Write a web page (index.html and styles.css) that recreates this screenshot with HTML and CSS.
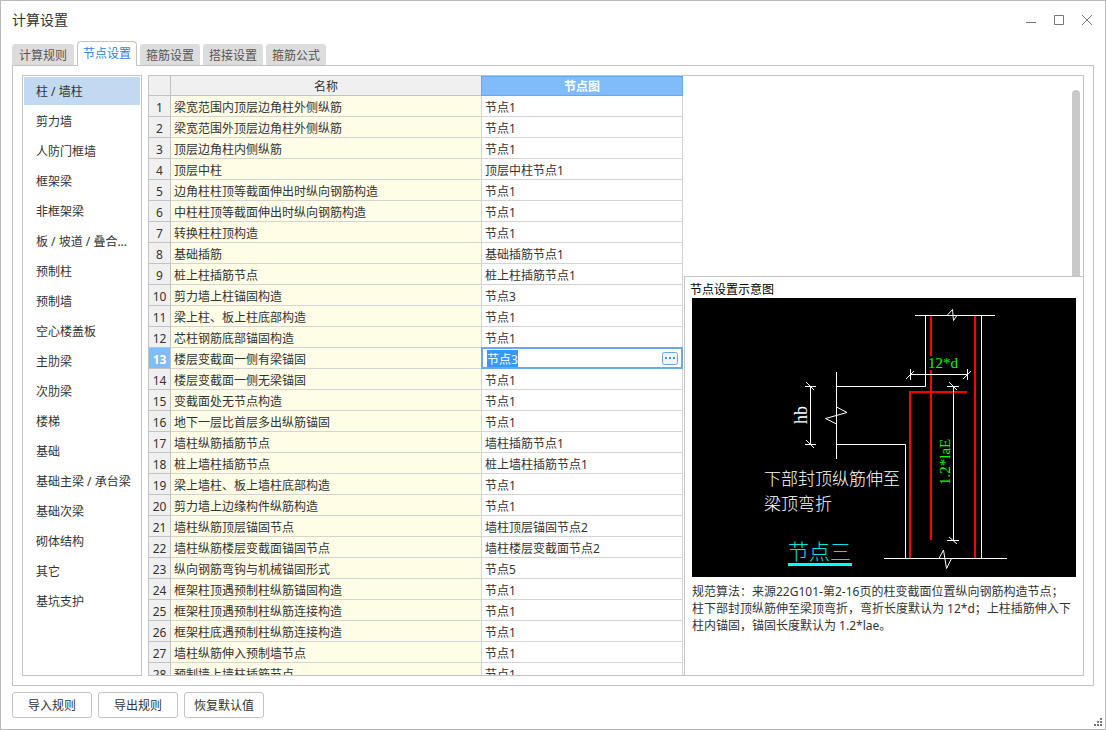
FILE: index.html
```html
<!DOCTYPE html>
<html lang="zh-CN">
<head>
<meta charset="utf-8">
<title>计算设置</title>
<link rel="stylesheet" href="styles.css">
</head>
<body>
<main class="dialog">
  <header class="titlebar">
    <h1 class="title">计算设置</h1>
    <div class="window-controls">
      <button type="button" class="window-button" aria-label="最小化"><svg width="12" height="12" viewBox="0 0 12 12"><path d="M1 8.500H11"/></svg></button>
      <button type="button" class="window-button" aria-label="最大化"><svg width="12" height="12" viewBox="0 0 12 12"><path d="M1.500 1.500H10.500V10.500H1.500Z"/></svg></button>
      <button type="button" class="window-button" aria-label="关闭"><svg width="12" height="12" viewBox="0 0 12 12"><path d="M1 1L11 11M11 1L1 11"/></svg></button>
    </div>
  </header>

  <div class="tabs" role="tablist">
    <button type="button" class="tab" role="tab">计算规则</button>
    <button type="button" class="tab tab-active" role="tab" aria-selected="true">节点设置</button>
    <button type="button" class="tab" role="tab">箍筋设置</button>
    <button type="button" class="tab" role="tab">搭接设置</button>
    <button type="button" class="tab" role="tab">箍筋公式</button>
  </div>

  <section class="panel">
    <nav class="categories">
      <button type="button" class="category category-active">柱 / 墙柱</button>
      <button type="button" class="category">剪力墙</button>
      <button type="button" class="category">人防门框墙</button>
      <button type="button" class="category">框架梁</button>
      <button type="button" class="category">非框架梁</button>
      <button type="button" class="category">板 / 坡道 / 叠合...</button>
      <button type="button" class="category">预制柱</button>
      <button type="button" class="category">预制墙</button>
      <button type="button" class="category">空心楼盖板</button>
      <button type="button" class="category">主肋梁</button>
      <button type="button" class="category">次肋梁</button>
      <button type="button" class="category">楼梯</button>
      <button type="button" class="category">基础</button>
      <button type="button" class="category">基础主梁 / 承台梁</button>
      <button type="button" class="category">基础次梁</button>
      <button type="button" class="category">砌体结构</button>
      <button type="button" class="category">其它</button>
      <button type="button" class="category">基坑支护</button>
    </nav>

    <div class="workspace">
      <div class="grid">
        <table class="nodes">
          <colgroup><col class="col-index"><col class="col-name"><col class="col-node"></colgroup>
          <thead>
            <tr><th></th><th scope="col">名称</th><th scope="col" class="current">节点图</th></tr>
          </thead>
          <tbody>
            <tr><th scope="row">1</th><td>梁宽范围内顶层边角柱外侧纵筋</td><td>节点1</td></tr>
            <tr><th scope="row">2</th><td>梁宽范围外顶层边角柱外侧纵筋</td><td>节点1</td></tr>
            <tr><th scope="row">3</th><td>顶层边角柱内侧纵筋</td><td>节点1</td></tr>
            <tr><th scope="row">4</th><td>顶层中柱</td><td>顶层中柱节点1</td></tr>
            <tr><th scope="row">5</th><td>边角柱柱顶等截面伸出时纵向钢筋构造</td><td>节点1</td></tr>
            <tr><th scope="row">6</th><td>中柱柱顶等截面伸出时纵向钢筋构造</td><td>节点1</td></tr>
            <tr><th scope="row">7</th><td>转换柱柱顶构造</td><td>节点1</td></tr>
            <tr><th scope="row">8</th><td>基础插筋</td><td>基础插筋节点1</td></tr>
            <tr><th scope="row">9</th><td>桩上柱插筋节点</td><td>桩上柱插筋节点1</td></tr>
            <tr><th scope="row">10</th><td>剪力墙上柱锚固构造</td><td>节点3</td></tr>
            <tr><th scope="row">11</th><td>梁上柱、板上柱底部构造</td><td>节点1</td></tr>
            <tr><th scope="row">12</th><td>芯柱钢筋底部锚固构造</td><td>节点1</td></tr>
            <tr>
              <th scope="row" class="current">13</th>
              <td id="row-13-name">楼层变截面一侧有梁锚固</td>
              <td class="editing">
                <div class="editor">
                  <input class="editor-input" type="text" value="节点3" aria-labelledby="row-13-name">
                  <button type="button" class="editor-more" aria-label="选择节点"><svg width="16" height="13" viewBox="0 0 16 13"><rect class="more-frame" x="0.500" y="0.500" width="15" height="12" rx="2"/><path class="more-dots" d="M3 5h2v2H3zM7 5h2v2H7zM11 5h2v2h-2z"/></svg></button>
                </div>
              </td>
            </tr>
            <tr><th scope="row">14</th><td>楼层变截面一侧无梁锚固</td><td>节点1</td></tr>
            <tr><th scope="row">15</th><td>变截面处无节点构造</td><td>节点1</td></tr>
            <tr><th scope="row">16</th><td>地下一层比首层多出纵筋锚固</td><td>节点1</td></tr>
            <tr><th scope="row">17</th><td>墙柱纵筋插筋节点</td><td>墙柱插筋节点1</td></tr>
            <tr><th scope="row">18</th><td>桩上墙柱插筋节点</td><td>桩上墙柱插筋节点1</td></tr>
            <tr><th scope="row">19</th><td>梁上墙柱、板上墙柱底部构造</td><td>节点1</td></tr>
            <tr><th scope="row">20</th><td>剪力墙上边缘构件纵筋构造</td><td>节点1</td></tr>
            <tr><th scope="row">21</th><td>墙柱纵筋顶层锚固节点</td><td>墙柱顶层锚固节点2</td></tr>
            <tr><th scope="row">22</th><td>墙柱纵筋楼层变截面锚固节点</td><td>墙柱楼层变截面节点2</td></tr>
            <tr><th scope="row">23</th><td>纵向钢筋弯钩与机械锚固形式</td><td>节点5</td></tr>
            <tr><th scope="row">24</th><td>框架柱顶遇预制柱纵筋锚固构造</td><td>节点1</td></tr>
            <tr><th scope="row">25</th><td>框架柱顶遇预制柱纵筋连接构造</td><td>节点1</td></tr>
            <tr><th scope="row">26</th><td>框架柱底遇预制柱纵筋连接构造</td><td>节点1</td></tr>
            <tr><th scope="row">27</th><td>墙柱纵筋伸入预制墙节点</td><td>节点1</td></tr>
            <tr><th scope="row">28</th><td>预制墙上墙柱插筋节点</td><td>节点1</td></tr>
          </tbody>
        </table>
      </div>

      <div class="side">
        <div class="scroll-area"><div class="scroll-thumb"></div></div>
        <section class="preview">
          <h2 class="preview-title">节点设置示意图</h2>
          <svg class="diagram" viewBox="0 0 384 279" role="img" aria-label="节点三">
            <rect width="384" height="279" fill="#000"/>
            <g class="rebar">
              <path d="M239 18V58M239 72V242"/>
              <path d="M283 18V260"/>
              <path d="M275 94H218V260"/>
            </g>
            <g class="outline">
              <path d="M223 17.500H303"/>
              <path d="M233.500 17V88.500H144.500"/>
              <path d="M289.500 17V260"/>
              <path d="M192 260.500H315"/>
              <path d="M144.500 146.500H213.500V260"/>
              <path d="M144.500 74V161"/>
              <path d="M144.500 109L155 114.500L133.500 120.500L144.500 126"/>
              <path d="M255 17.500L260.500 11.500L261.500 22.500L265 17.500"/>
              <path d="M247 260.500L251.500 252L254.500 270.500L259.500 260.500"/>
            </g>
            <g class="outline">
              <path d="M218 76.500H276M218.500 71V82M275.500 71V82M214 81L222 73M271 81L279 73"/>
              <path d="M261.500 88V243M255 88.500H267M255 242.500H267M257 84L265 92M257 239L265 246"/>
              <path d="M118.500 88V147M113 88.500H124M113 146.500H124M114 84L122 92M114 142L122 150"/>
            </g>
            <text class="dim" x="236" y="70">12*d</text>
            <text class="dim" transform="translate(258 187) rotate(-90)">1.2*laE</text>
            <text class="beam" transform="translate(115 126) rotate(-90)">hb</text>
            <text class="note" x="72" y="187">下部封顶纵筋伸至</text>
            <text class="note" x="72" y="212">梁顶弯折</text>
            <text class="caption" x="96" y="261">节点三</text>
            <rect x="96" y="265" width="64" height="3" fill="#0ff"/>
          </svg>
          <p class="rule">规范算法：来源22G101-第2-16页的柱变截面位置纵向钢筋构造节点；柱下部封顶纵筋伸至梁顶弯折，弯折长度默认为 12*d；上柱插筋伸入下柱内锚固，锚固长度默认为 1.2*lae。</p>
        </section>
      </div>
    </div>
  </section>

  <footer class="actions">
    <button type="button" class="action">导入规则</button>
    <button type="button" class="action">导出规则</button>
    <button type="button" class="action">恢复默认值</button>
  </footer>
  <svg class="grip" width="8" height="8" viewBox="0 0 8 8"><path d="M6 0h2v2H6zM3 3h2v2H3zM6 3h2v2H6zM0 6h2v2H0zM3 6h2v2H3zM6 6h2v2H6z"/></svg>
</main>
<script src="app.js"></script>
</body>
</html>
```

FILE: styles.css
```css
* {
  box-sizing: border-box;
}

body {
  margin: 0;
  color: #333;
  font-family: "Noto Sans", "Noto Sans CJK SC", sans-serif;
  font-size: 12px;
  line-height: 16px;
}

button,
input {
  margin: 0;
  padding: 0;
  border: 0;
  background: none;
  color: inherit;
  font: inherit;
}

.dialog {
  position: relative;
  display: flex;
  flex-direction: column;
  height: 100vh;
  border: 1px solid #b9b9b9;
  background: #fff;
}

.titlebar {
  display: flex;
  align-items: center;
  justify-content: space-between;
  height: 38px;
  padding: 0 4px 0 11px;
}

.title {
  margin: 0;
  font-size: 14px;
  font-weight: 400;
  line-height: 18px;
}

.window-controls {
  display: flex;
}

.window-button {
  display: grid;
  place-items: center;
  width: 28px;
  height: 28px;
}

.window-button path {
  fill: none;
  stroke: #777;
}

.tabs {
  position: relative;
  display: flex;
  align-items: flex-end;
  gap: 3px;
  margin: 2px 11px -1px;
}

.tab {
  height: 21px;
  margin-bottom: 1px;
  padding: 2px 6px 0;
  border-radius: 3px 3px 0 0;
  background: #ddd;
  color: #555;
}

.tab:first-child {
  padding: 2px 7px 0;
}

.tab-active {
  height: 25px;
  margin-bottom: 0;
  padding: 0 5px;
  border: 1px solid #c3c3c3;
  border-bottom: 0;
  border-radius: 4px 4px 0 0;
  background: #fff;
  color: #2a82e4;
}

.panel {
  display: grid;
  flex: 1;
  grid-template-columns: 120px minmax(0, 1fr);
  gap: 6px;
  min-height: 0;
  margin: 0 11px;
  padding: 9px;
  border: 1px solid #c3c3c3;
}

.categories {
  display: flex;
  flex-direction: column;
  gap: 2px;
  min-height: 0;
  padding: 1px;
  border: 1px solid #c3c3c3;
  overflow: hidden;
}

.category {
  flex: none;
  height: 28px;
  padding: 2px 0 0 12px;
  text-align: left;
  white-space: nowrap;
}

.category-active {
  background: #c2d9f2;
}

.workspace {
  display: grid;
  grid-template-columns: 534px minmax(0, 1fr);
  min-height: 0;
  border: 1px solid #c3c3c3;
}

.grid {
  min-height: 0;
  overflow: auto;
  scrollbar-width: none;
}

.nodes {
  width: 100%;
  border-collapse: separate;
  border-spacing: 0;
  table-layout: fixed;
}

.col-index {
  width: 22px;
}

.col-node {
  width: 201px;
}

.nodes th,
.nodes td {
  height: 21px;
  padding: 3px 0 0;
  border-right: 1px solid #d4d4d4;
  border-bottom: 1px solid #d4d4d4;
  font-weight: 400;
  white-space: nowrap;
}

.nodes th {
  border-color: #c3c3c3;
  background: #f0f0f0;
  text-align: center;
}

.nodes thead th {
  height: 20px;
}

.nodes td {
  padding-left: 3px;
}

.nodes td:nth-child(2) {
  background: #fffde6;
}

.nodes .current {
  background: #80bbfa;
  color: #fff;
  font-weight: 700;
}

.nodes thead .current {
  padding-top: 2px;
  border: 1px solid #68a8e8;
  border-left: 0;
  box-shadow: -1px 0 #68a8e8;
}

.nodes .editing {
  position: relative;
  padding: 0;
}

.editor {
  position: absolute;
  inset: -1px -1px -1px -1px;
  display: flex;
  align-items: center;
  padding: 0 3px 0 4px;
  border: 2px solid #68a8e8;
  background: #fff;
}

.editor-input {
  flex: 1;
  min-width: 0;
  height: 18px;
  padding-top: 1px;
  outline: 0;
}

.editor-input::selection {
  background: #3399ff;
  color: #fff;
}

.editor-more {
  display: flex;
}

.more-frame {
  fill: #f0f4fa;
  stroke: #68a8e8;
}

.more-dots {
  fill: #4a90e2;
}

.side {
  display: grid;
  grid-template-rows: 200px minmax(0, 1fr);
  min-height: 0;
}

.scroll-area {
  display: flex;
  justify-content: flex-end;
  padding: 14px 3px 0 0;
}

.scroll-thumb {
  width: 8px;
  border-radius: 4px 4px 0 0;
  background: #c9c9c9;
}

.preview {
  margin-left: 1px;
  padding: 4px 7px;
  border-top: 1px solid #c3c3c3;
  border-left: 1px solid #c3c3c3;
  overflow: hidden;
}

.preview-title {
  margin: 0 0 0 -2px;
  color: #000;
  font-size: 12px;
  font-weight: 400;
  line-height: 17px;
}

.diagram {
  display: block;
  width: 100%;
}

.rebar path {
  fill: none;
  stroke: #f00;
  stroke-width: 2;
}

.outline path {
  fill: none;
  stroke: #fff;
}

.dim {
  fill: #0f0;
  font-family: "Liberation Serif", serif;
  font-size: 15px;
}

.beam {
  fill: #fff;
  font-family: "Liberation Serif", serif;
  font-size: 18px;
}

.note {
  fill: #fff;
  font-family: "Noto Sans CJK SC", sans-serif;
  font-size: 17px;
  font-weight: 300;
}

.caption {
  fill: #00e5e5;
  font-family: "Noto Sans CJK SC", sans-serif;
  font-size: 21px;
  font-weight: 300;
}

.rule {
  margin: 6px 0 0;
  padding-right: 4px;
  line-height: 17px;
}

.actions {
  display: flex;
  gap: 6px;
  padding: 6px 11px 11px;
}

.action {
  width: 80px;
  height: 26px;
  padding-top: 2px;
  border: 1px solid #c3c3c3;
  border-radius: 3px;
  background: #fff;
}

.grip {
  position: absolute;
  right: 3px;
  bottom: 3px;
  fill: #777;
}
```

FILE: app.js
```js
const editorInput = document.querySelector(".editor-input");
editorInput.focus();
editorInput.select();
```
